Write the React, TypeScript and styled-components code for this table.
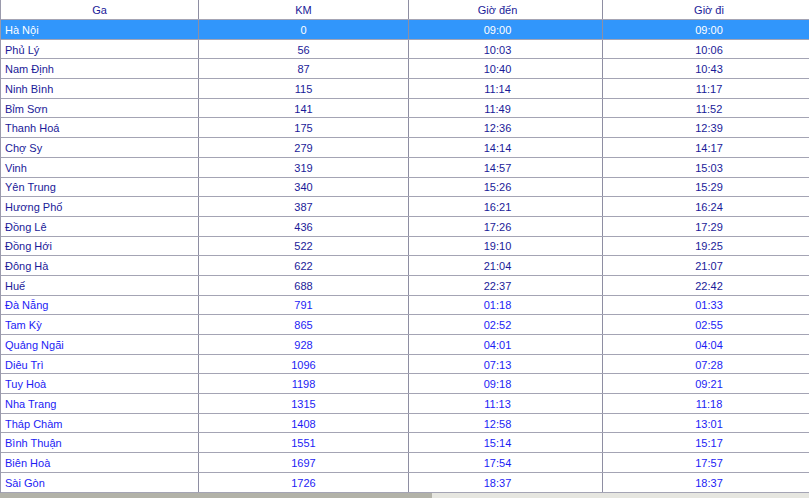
import React from "react";
import styled, { createGlobalStyle } from "styled-components";

const Global = createGlobalStyle`
  html, body { margin: 0; padding: 0; background: #ffffff; overflow: hidden; }
  body { font-family: Tahoma, "Liberation Sans", "DejaVu Sans", sans-serif; }
`;

const Page = styled.div`
  width: 809px;
  height: 498px;
  overflow: hidden;
  display: flex;
  flex-direction: column;
  background: #ffffff;
`;

const Table = styled.div`
  display: flex;
  flex-direction: column;
  border-left: 1px solid #9a9aac;
  width: 808px;
`;

const Row = styled.div<{ $selected?: boolean; $height: number }>`
  display: grid;
  grid-template-columns: 198px 210px 194px 206px;
  height: ${(p) => p.$height}px;
  box-sizing: border-box;
  border-bottom: 1px solid #a4a4b4;
  background: ${(p) => (p.$selected ? "#3196fb" : "#ffffff")};
`;

const Cell = styled.div<{ $align: "left" | "center"; $tone: "dark" | "bright" | "white"; $padL?: number; $padR?: number; $divider?: boolean }>`
  display: flex;
  align-items: center;
  justify-content: ${(p) => (p.$align === "left" ? "flex-start" : "center")};
  padding-top: 2px;
  padding-left: ${(p) => p.$padL ?? 0}px;
  padding-right: ${(p) => p.$padR ?? 0}px;
  border-right: ${(p) => (p.$divider ? "1px solid #8e8ea2" : "none")};
  font-size: 11px;
  line-height: 1;
  white-space: nowrap;
  color: ${(p) => (p.$tone === "white" ? "#ffffff" : p.$tone === "dark" ? "#1a1a98" : "#1c1cf4")};
  box-sizing: border-box;
`;

const ScrollBar = styled.div`
  display: flex;
  height: 16px;
  flex-shrink: 0;
`;

const Thumb = styled.div`
  width: 432px;
  background: #b2b2a8;
`;

const Track = styled.div`
  flex: 1;
  background: #e6e6e0;
`;

const stations: [string, string, string, string][] = [
  ["Hà Nội", "0", "09:00", "09:00"],
  ["Phủ Lý", "56", "10:03", "10:06"],
  ["Nam Định", "87", "10:40", "10:43"],
  ["Ninh Bình", "115", "11:14", "11:17"],
  ["Bỉm Sơn", "141", "11:49", "11:52"],
  ["Thanh Hoá", "175", "12:36", "12:39"],
  ["Chợ Sy", "279", "14:14", "14:17"],
  ["Vinh", "319", "14:57", "15:03"],
  ["Yên Trung", "340", "15:26", "15:29"],
  ["Hương Phố", "387", "16:21", "16:24"],
  ["Đồng Lê", "436", "17:26", "17:29"],
  ["Đồng Hới", "522", "19:10", "19:25"],
  ["Đông Hà", "622", "21:04", "21:07"],
  ["Huế", "688", "22:37", "22:42"],
  ["Đà Nẵng", "791", "01:18", "01:33"],
  ["Tam Kỳ", "865", "02:52", "02:55"],
  ["Quảng Ngãi", "928", "04:01", "04:04"],
  ["Diêu Trì", "1096", "07:13", "07:28"],
  ["Tuy Hoà", "1198", "09:18", "09:21"],
  ["Nha Trang", "1315", "11:13", "11:18"],
  ["Tháp Chàm", "1408", "12:58", "13:01"],
  ["Bình Thuận", "1551", "15:14", "15:17"],
  ["Biên Hoà", "1697", "17:54", "17:57"],
  ["Sài Gòn", "1726", "18:37", "18:37"],
];

export default function App() {
  return (
    <Page>
      <Global />
      <Table>
        <Row $height={20}>
          <Cell $align="center" $tone="dark" $divider>Ga</Cell>
          <Cell $align="center" $tone="dark" $divider>KM</Cell>
          <Cell $align="center" $tone="dark" $padR={16} $divider>Giờ đến</Cell>
          <Cell $align="center" $tone="dark" $padL={6}>Giờ đi</Cell>
        </Row>
        {stations.map((s, i) => {
          const tone = i === 0 ? "white" : i < 14 ? "dark" : "bright";
          return (
            <Row key={s[0]} $selected={i === 0} $height={19.7}>
              <Cell $align="left" $tone={tone} $padL={4} $divider>{s[0]}</Cell>
              <Cell $align="center" $tone={tone} $divider>{s[1]}</Cell>
              <Cell $align="center" $tone={tone} $padR={16} $divider>{s[2]}</Cell>
              <Cell $align="center" $tone={tone} $padL={6}>{s[3]}</Cell>
            </Row>
          );
        })}
      </Table>
      <ScrollBar>
        <Thumb />
        <Track />
      </ScrollBar>
    </Page>
  );
}
